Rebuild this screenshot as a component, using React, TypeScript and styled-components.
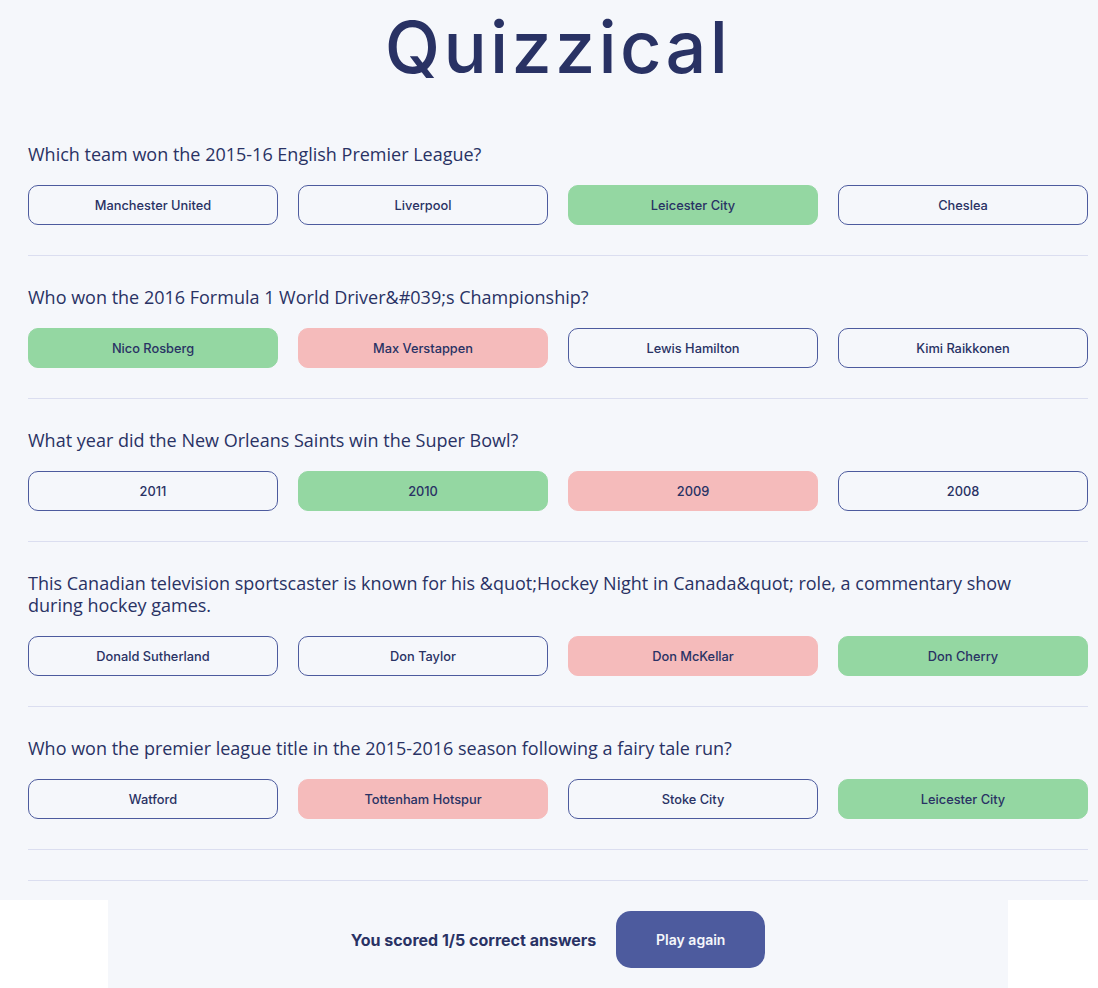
import React from "react";
import styled, { createGlobalStyle } from "styled-components";

const GlobalStyle = createGlobalStyle`
  html, body {
    margin: 0;
    padding: 0;
    background: #ffffff;
    overflow-x: hidden;
  }
  * { box-sizing: border-box; }
`;

type Status = "neutral" | "correct" | "wrong";

interface Question {
  text: string;
  answers: { label: string; status: Status }[];
}

const questions: Question[] = [
  {
    text: "Which team won the 2015-16 English Premier League?",
    answers: [
      { label: "Manchester United", status: "neutral" },
      { label: "Liverpool", status: "neutral" },
      { label: "Leicester City", status: "correct" },
      { label: "Cheslea", status: "neutral" },
    ],
  },
  {
    text: "Who won the 2016 Formula 1 World Driver&#039;s Championship?",
    answers: [
      { label: "Nico Rosberg", status: "correct" },
      { label: "Max Verstappen", status: "wrong" },
      { label: "Lewis Hamilton", status: "neutral" },
      { label: "Kimi Raikkonen", status: "neutral" },
    ],
  },
  {
    text: "What year did the New Orleans Saints win the Super Bowl?",
    answers: [
      { label: "2011", status: "neutral" },
      { label: "2010", status: "correct" },
      { label: "2009", status: "wrong" },
      { label: "2008", status: "neutral" },
    ],
  },
  {
    text: "This Canadian television sportscaster is known for his &quot;Hockey Night in Canada&quot; role, a commentary show during hockey games.",
    answers: [
      { label: "Donald Sutherland", status: "neutral" },
      { label: "Don Taylor", status: "neutral" },
      { label: "Don McKellar", status: "wrong" },
      { label: "Don Cherry", status: "correct" },
    ],
  },
  {
    text: "Who won the premier league title in the 2015-2016 season following a fairy tale run?",
    answers: [
      { label: "Watford", status: "neutral" },
      { label: "Tottenham Hotspur", status: "wrong" },
      { label: "Stoke City", status: "neutral" },
      { label: "Leicester City", status: "correct" },
    ],
  },
];

const Page = styled.div`
  width: 1116px;
`;

const QuizSection = styled.main`
  background: #f5f7fb;
  padding: 3px 28px 19px;
`;

const Title = styled.h1`
  margin: 0 0 23px;
  text-align: center;
  font-family: Inter, "Liberation Sans", sans-serif;
  font-weight: 500;
  font-size: 72px;
  letter-spacing: 3.3px;
  color: #293264;
`;

const QuestionBlock = styled.section`
  padding: 30px 0;
  border-bottom: 1px solid #dbdef0;
`;

const Spacer = styled.div`
  height: 31px;
  border-bottom: 1px solid #dbdef0;
`;

const QuestionText = styled.h2`
  margin: 0 0 20px;
  max-width: 1030px;
  font-family: "Open Sans", "Liberation Sans", sans-serif;
  font-weight: 500;
  font-size: 18px;
  line-height: 22px;
  color: #293264;
`;

const AnswerRow = styled.div`
  display: grid;
  grid-template-columns: repeat(4, 250px);
  gap: 20px;
`;

const statusBg: Record<Status, string> = {
  neutral: "transparent",
  correct: "#94d7a2",
  wrong: "#f5bbbb",
};

const AnswerButton = styled.button<{ $status: Status }>`
  height: 40px;
  border-radius: 10px;
  border: 1px solid ${(p) => (p.$status === "neutral" ? "#4d5b9e" : statusBg[p.$status])};
  background: ${(p) => statusBg[p.$status]};
  font-family: Inter, "Liberation Sans", sans-serif;
  font-weight: 500;
  font-size: 12.8px;
  color: #293264;
  cursor: pointer;
`;

const Footer = styled.footer`
  width: 900px;
  margin: 0 auto;
  background: #f5f7fb;
  padding: 11px 0 20px;
  display: flex;
  align-items: center;
  justify-content: center;
  gap: 20px;
`;

const Score = styled.p`
  margin: 0;
  font-family: Inter, "Liberation Sans", sans-serif;
  font-weight: 700;
  font-size: 16px;
  color: #293264;
`;

const PlayButton = styled.button`
  width: 149px;
  height: 57px;
  border: none;
  border-radius: 15px;
  background: #4d5b9e;
  color: #f5f7fb;
  font-family: Inter, "Liberation Sans", sans-serif;
  font-weight: 600;
  font-size: 14px;
  cursor: pointer;
`;

export default function App() {
  return (
    <Page>
      <GlobalStyle />
      <QuizSection>
        <Title>Quizzical</Title>
        {questions.map((q, i) => (
          <QuestionBlock key={i}>
            <QuestionText>{q.text}</QuestionText>
            <AnswerRow>
              {q.answers.map((a) => (
                <AnswerButton key={a.label} $status={a.status}>
                  {a.label}
                </AnswerButton>
              ))}
            </AnswerRow>
          </QuestionBlock>
        ))}
        <Spacer />
      </QuizSection>
      <Footer>
        <Score>You scored 1/5 correct answers</Score>
        <PlayButton>Play again</PlayButton>
      </Footer>
    </Page>
  );
}
